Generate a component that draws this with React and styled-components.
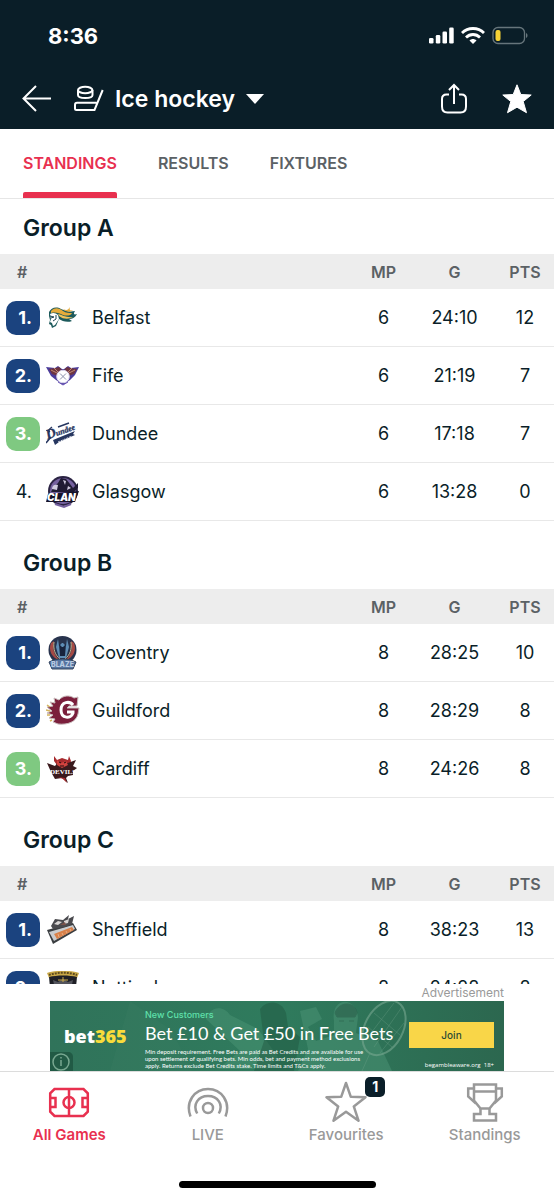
import React, { useState } from 'react';
import styled, { createGlobalStyle, css } from 'styled-components';

const GlobalStyle = createGlobalStyle`
  * {
    box-sizing: border-box;
  }

  body {
    margin: 0;
    background: #fff;
    color: #0a1e28;
    font-family: Inter, 'Liberation Sans', sans-serif;
  }

  button {
    padding: 0;
    border: none;
    background: none;
    color: inherit;
    font: inherit;
    cursor: pointer;
  }
`;

/* ---------- team crests ---------- */

const BelfastCrest = () => (
  <>
    <path d="M3 11C5 7 10 5 15 8c5 2 8 3 14 2-2 3-1 4 2 3-2 4-5 5-8 5l3 2c-5 2-10 0-13-2L10 25l-4 2-1-3-2-1 1-4-1-4z" fill="#1d5a5c" />
    <path d="M5 10c4-4 8-3 12 0 3 2 6 2 9 2-1 3-6 3-9 2-4-2-7-3-12-2z" fill="#e5ab3a" />
    <path d="M12 13c4 1 9 4 15 3-3 2-9 3-14-1z" fill="#efc35b" />
    <path d="M17 8c4 2 5 1 7-2-1 3 0 4 3 3-3 3-7 2-10-1z" fill="#e5ab3a" />
    <path d="M4 13c3-2 6-1 8 1l1 4-4 6-2 1-1-3-2-1 1-3z" fill="#fff" />
    <path d="M4 15l4 1-3 1M7 20l3-2M10 14v4" stroke="#1d4552" strokeWidth="1" fill="none" />
  </>
);

const FifeCrest = () => (
  <>
    <path d="M0 8l9 1 3-2 4 3h2l4-3 3 2 8-1-4 8-5 5-7 5-7-5-5-4z" fill="#4b3c9b" />
    <path d="M3 10l7-1 3-1 4 4-5 5-6-2zM31 10l-7-1-3-1-4 4 5 5 6-2z" fill="#6e3440" />
    <path d="M5 11l6 3M8 9l4 4M29 11l-6 3M26 9l-4 4" stroke="#c08a72" strokeWidth="1" />
    <circle cx="17" cy="17.500" r="6.300" fill="#fff" stroke="#d9d6ee" />
    <path d="M14 14.500l6 6M20 14.500l-6 6" stroke="#8b91ad" strokeWidth="1" />
    <path d="M12 23l5 3 5-3" stroke="#6b55b8" fill="none" />
  </>
);

const DundeeCrest = () => (
  <>
    <path d="M7 23l22-9-2 3 2 1-16 7-4 3z" fill="#26365f" />
    <path d="M12 25l14-6" stroke="#d9dde8" strokeWidth="1" strokeDasharray="2 1" />
    <path d="M6 10C3 12 2 14 4 15M12 10l11-4M5 20l-5 6" fill="none" stroke="#26365f" strokeWidth="1.500" />
    <g
      transform="rotate(-20 3 24)"
      fontFamily="Liberation Serif, serif"
      fontStyle="italic"
      fontWeight="700"
      fill="#26365f"
      stroke="#26365f"
      strokeWidth="0.300"
    >
      <text x="2" y="22" fontSize="14">D</text>
      <text x="12" y="22" fontSize="8">undee</text>
    </g>
  </>
);

const GlasgowCrest = () => (
  <>
    <circle cx="17" cy="16" r="15" fill="#2a2343" />
    <circle cx="17" cy="16" r="13" fill="#75619f" />
    <path d="M7 13l5-5 3-5 5 1 4 5 3 4 5-5v5l-4 4H5z" fill="#1f1a33" />
    <path d="M6 14c0-4 3-5 6-4l-1 5zM17 5l3 1-1 4zM22 11l3 2-4 2z" fill="#cfcadf" />
    <path d="M2 19l31-3-4 11H0z" fill="#17132a" />
    <text
      x="1"
      y="26"
      fontFamily="Inter, sans-serif"
      fontSize="10"
      fontStyle="italic"
      fontWeight="900"
      fill="#fff"
    >
      CLAN
    </text>
    <path d="M9 29l9 3 7-3" stroke="#75619f" strokeWidth="2" fill="none" />
  </>
);

const CoventryCrest = () => (
  <>
    <circle cx="16.500" cy="14" r="14" fill="#28334d" />
    <path d="M5 7c-3 7 1 15 8 17C8 18 6 13 8 5zM28 7c3 7-1 15-8 17 5-6 7-11 5-19z" fill="#a54a45" />
    <path d="M8 6c-1 7 1 13 6 17M25 6c1 7-1 13-6 17" stroke="#c6b38a" strokeWidth="1" fill="none" />
    <path d="M12 3l1 7 3-3h1l3 3 1-7 2 8-3 11h-7L10 11z" fill="#5f8db5" />
    <path d="M13 8l3 3h1l3-3-1 12h-5z" fill="#18233d" />
    <path d="M3 26c7-4 20-4 27 0l-3 7H6z" fill="#56749f" stroke="#33445f" />
    <text
      x="5"
      y="31"
      fontFamily="Inter, sans-serif"
      fontSize="7"
      fontWeight="800"
      fill="#b9cbe2"
    >
      BLAZE
    </text>
  </>
);

const GuildfordCrest = () => (
  <>
    <path
      d="M32 3l-1 9h-8l-2 2h12l-1 6c-2 8-10 11-20 10l-5-2 2-3-6-1 4-3-6-2 5-2-5-4 6-1-3-4 5 1-1-5 5 2C17 1 24 1 28 4z"
      fill="#7b1f3c"
      stroke="#c9bcbc"
      strokeWidth="1"
    />
    <path d="M27 11c-3-4-12-4-12 5 0 9 10 9 12 3v-1h-6" stroke="#fff" strokeWidth="3" fill="none" />
    <path d="M1 11l3 2M0 16l4 1M1 21l3 0M4 27l2-1" stroke="#d5b45c" strokeWidth="1.500" />
  </>
);

const CardiffCrest = () => (
  <>
    <path d="M8 4l3 4 5-2 6 2 1-4 2 5-1 4H11L8 9z" fill="#a72a2d" />
    <path d="M1 11l8 3 3-4 7 2 11-4-3 6 4 2-4 3 0 4-5 1-2 2 2 5-6-5-7 1-4-7z" fill="#3a1a1d" />
    <path d="M11 8l4 3 5-2 2 4-6 3-5-3z" fill="#d0433f" />
    <path d="M13 10l2 1M18 11l2-1M14 14h4" stroke="#1e0c0e" strokeWidth="1" />
    <text
      x="4"
      y="22"
      fontFamily="Liberation Serif, serif"
      fontSize="7"
      fontWeight="700"
      fill="#fff"
    >
      DEVILS
    </text>
    <path d="M12 25l5 2 4 4-2-5" fill="#a72a2d" />
  </>
);

const SheffieldCrest = () => (
  <>
    <path d="M1 17l26-7 4 7-24 14z" fill="#3a3d40" />
    <path d="M3 19l24-7 2 4-21 12z" fill="#c9cccf" />
    <path d="M8 21l18-7 2 3-17 9z" fill="#d9814a" />
    <path d="M12 21l1 3M16 20l1 2M20 18l1 2M24 16l1 2" stroke="#e9c3a4" strokeWidth="0.700" />
    <path d="M5 13l4-7 8 1 6-5-1 4 6-3-2 8-7 3-12 2z" fill="#4a4a4e" />
    <path d="M8 11l4-3 4 1-4 3zM18 8l5-2-1 4-4 1z" fill="#d8d5d4" />
    <path d="M14 12l5-3 1 3z" fill="#79524a" />
  </>
);

const NottinghamCrest = () => (
  <>
    <path d="M1 2C9-1 25-1 33 2l-2 5H3z" fill="#caa948" />
    <path d="M3 6c8-2 20-2 28 0l-2 20-12 7L5 26z" fill="#1f2026" />
    <path d="M3 4c8-3 20-3 28 0" stroke="#5f4c1e" strokeWidth="2" strokeDasharray="2 1" fill="none" />
    <path d="M7 9l5 2 5-3 5 3 5-2-2 9H9z" fill="#53545c" />
    <path d="M17 6v5M12 9h10" stroke="#caa948" strokeWidth="1" />
  </>
);

const crests = {
  Belfast: BelfastCrest,
  Fife: FifeCrest,
  Dundee: DundeeCrest,
  Glasgow: GlasgowCrest,
  Coventry: CoventryCrest,
  Guildford: GuildfordCrest,
  Cardiff: CardiffCrest,
  Sheffield: SheffieldCrest,
  Nottingham: NottinghamCrest,
};

/* ---------- data ---------- */

const groups = [
  {
    name: 'Group A',
    teams: [
      { name: 'Belfast', zone: 'top', mp: 6, goals: '24:10', pts: 12 },
      { name: 'Fife', zone: 'top', mp: 6, goals: '21:19', pts: 7 },
      { name: 'Dundee', zone: 'next', mp: 6, goals: '17:18', pts: 7 },
      { name: 'Glasgow', mp: 6, goals: '13:28', pts: 0 },
    ],
  },
  {
    name: 'Group B',
    teams: [
      { name: 'Coventry', zone: 'top', mp: 8, goals: '28:25', pts: 10 },
      { name: 'Guildford', zone: 'top', mp: 8, goals: '28:29', pts: 8 },
      { name: 'Cardiff', zone: 'next', mp: 8, goals: '24:26', pts: 8 },
    ],
  },
  {
    name: 'Group C',
    teams: [
      { name: 'Sheffield', zone: 'top', mp: 8, goals: '38:23', pts: 13 },
      { name: 'Nottingham', zone: 'top', mp: 8, goals: '24:28', pts: 8 },
    ],
  },
];

const tabs = ['STANDINGS', 'RESULTS', 'FIXTURES'];

/* ---------- icons ---------- */

const StatusIcons = () => (
  <svg width="100" height="20" viewBox="0 0 100 20" fill="#fff" aria-hidden="true">
    <rect x="0" y="12" width="4.500" height="5.500" rx="1.300" />
    <rect x="6.800" y="9" width="4.500" height="8.500" rx="1.300" />
    <rect x="13.500" y="5.500" width="4.500" height="12" rx="1.300" />
    <rect x="20.200" y="1.500" width="4.500" height="16" rx="1.300" />
    <g fill="none" stroke="#fff" strokeWidth="2.800">
      <path d="M33 7c6-6 16-6 22 0" />
      <path d="M37 11.500c4-4 10-4 14 0" />
    </g>
    <path d="M40.500 14.500c2-2 5-2 7 0L44 18z" />
    <rect x="64" y="1.500" width="31.500" height="16" rx="5" fill="none" stroke="#66757b" strokeWidth="1.300" />
    <path d="M97 7c2 .8 2 4.200 0 5z" fill="#66757b" />
    <rect x="66.500" y="4" width="5" height="11" rx="2" fill="#f7d335" />
  </svg>
);

const BackIcon = () => (
  <svg width="30" height="28" viewBox="0 0 30 28" fill="none" stroke="#fff" strokeWidth="2">
    <path d="M14 1L1.500 13.500 14 26M1.500 13.500H29" />
  </svg>
);

const HockeyIcon = () => (
  <svg width="30" height="28" viewBox="0 0 30 28" fill="none" stroke="#fff" strokeWidth="2">
    <path d="M4 5v5c0 4 14.500 4 14.500 0V5" />
    <ellipse cx="11.200" cy="5" rx="7.200" ry="3.200" />
    <path d="M28.700 5L20.500 25H2.500c-1 0-1.500-.5-1.500-1.500V20c0-1.500.7-2.200 2-2.200h19.500" />
  </svg>
);

const ShareIcon = () => (
  <svg width="28" height="32" viewBox="0 0 28 32" fill="none" stroke="#fff" strokeWidth="2">
    <path d="M9 11.500H6.500c-3 0-4.500 1.500-4.500 4.500v7.500c0 4 1.500 6 5.500 6h13c4 0 5.500-2 5.500-6V16c0-3-1.500-4.500-4.500-4.500H19" />
    <path d="M14 21V2.500M9 7l5-5 5 5" />
  </svg>
);

const StarFilledIcon = () => (
  <svg width="30" height="30" viewBox="0 0 30 30" fill="#fff" stroke="#fff" strokeLinejoin="round">
    <path d="M15 .8l3.800 9.700 10.400.5-8 6.500 3.300 11.200-9.500-5.500-9.500 5.500 3.300-11.200L.8 11l10.400-.5z" />
  </svg>
);

const PitchIcon = () => (
  <svg width="42" height="42" viewBox="0 0 42 42" fill="none" stroke="currentColor" strokeWidth="2.500">
    <path d="M6.500 8h29l4.300 4.300v18.400L35.500 35h-29l-4.300-4.300V12.300zM21 8v27" />
    <circle cx="21" cy="21.500" r="5.500" />
    <path d="M2 17h5.500v9H2M40 17h-5.500v9H40" />
  </svg>
);

const LiveIcon = () => (
  <svg width="42" height="42" viewBox="0 0 42 42" fill="none" stroke="currentColor" strokeWidth="2.500">
    <circle cx="21" cy="27" r="5" />
    <path d="M10.200 32.500c-5-9 1-17.500 10.800-17.500s15.800 8.500 10.800 17.500" />
    <path d="M3.500 35.500C-2 21 7.500 8 21 8s23 13 17.500 27.500" />
  </svg>
);

const StarIcon = () => (
  <svg width="42" height="42" viewBox="0 0 42 42" fill="none" stroke="currentColor" strokeWidth="2.500" strokeLinejoin="round">
    <path d="M21 2l4.800 13.800 14.700.4-11.700 9.200 4.700 14.300L21 30.800 8.500 39.700l4.700-14.300L1.500 16.200l14.700-.4z" />
  </svg>
);

const TrophyIcon = () => (
  <svg width="42" height="42" viewBox="0 0 42 42" fill="none" stroke="currentColor" strokeWidth="2.500">
    <path d="M10 3.500h22v16l-6.500 8h-9l-6.500-8zM10 10.500h22" />
    <path d="M10 7.500H4.200v8L12 22.500M32 7.500h5.800v8L30 22.500" />
    <path d="M16.500 27.500v5.500H10v6.500h22V33h-6.500v-5.500" />
  </svg>
);

const navItems = [
  { label: 'All Games', Icon: PitchIcon, active: true },
  { label: 'LIVE', Icon: LiveIcon },
  { label: 'Favourites', Icon: StarIcon, count: 1 },
  { label: 'Standings', Icon: TrophyIcon },
];

const BannerArt = () => (
  <BannerDrawing viewBox="0 0 454 70" preserveAspectRatio="xMidYMid slice" aria-hidden="true">
    <defs>
      <linearGradient id="pitch" x1="0" x2="1">
        <stop offset="0" stopColor="#30735a" />
        <stop offset="0.500" stopColor="#2f7b5d" />
        <stop offset="1" stopColor="#2c674f" />
      </linearGradient>
    </defs>
    <rect width="454" height="70" fill="url(#pitch)" />
    <path d="M80 0l42 30 20 40H60z" fill="#3a7d64" opacity="0.300" />
    <path d="M156 18c5-14 18-13 24-4l28 14 20 28-10 12h-50l22-18z" fill="#56a17f" opacity="0.350" />
    <path d="M210 8c8-10 22-8 26 4l2 14 12 10-6 34h-40l10-30z" fill="#20543f" opacity="0.450" />
    <path d="M250 10l16-4 6 12-14 8 8 14 18-6v-14c-4-24 22-26 24-4l-2 16 22 8 14 30h-94l10-22z" fill="#4c9375" opacity="0.500" />
    <path d="M285 12c4-12 20-12 22 0l-2 4h-18zM289 20h5M299 20h5" fill="#244f3f" stroke="#244f3f" opacity="0.400" />
    <g fill="none" stroke="#78a891" opacity="0.600">
      <ellipse cx="334" cy="27" rx="19" ry="29" transform="rotate(28 334 27)" strokeWidth="2" />
      <path d="M320 52l-8 18M324 46l28-40M318 36l26-34M330 52l24-30M324 12l26 22M318 26l24 20" strokeWidth="0.500" />
    </g>
    <path d="M0 51h18c3 0 5 2 5 5v14H0z" fill="#215a45" />
    <g fill="none" stroke="#78a891" strokeWidth="1.500">
      <circle cx="11" cy="61" r="8" />
      <path d="M11 59v6M11 56v1.500" />
    </g>
  </BannerDrawing>
);

/* ---------- page ---------- */

const StandingsTable = ({ group }) => (
  <Table aria-label={group.name}>
    <thead>
      <tr>
        <HeadCell $width={40} $first>#</HeadCell>
        <HeadCell aria-label="Team" />
        <HeadCell $width={59}>MP</HeadCell>
        <HeadCell $width={83}>G</HeadCell>
        <HeadCell $width={58}>PTS</HeadCell>
      </tr>
    </thead>
    <tbody>
      {group.teams.map((team, index) => {
        const Crest = crests[team.name];
        return (
          <tr key={team.name}>
            <RankCell>
              <Rank $zone={team.zone}>{index + 1}.</Rank>
            </RankCell>
            <Cell>
              <Team>
                <svg width="34" height="34" viewBox="0 0 34 34" aria-hidden="true">
                  <Crest />
                </svg>
                {team.name}
              </Team>
            </Cell>
            <Cell>{team.mp}</Cell>
            <Cell>{team.goals}</Cell>
            <Cell>{team.pts}</Cell>
          </tr>
        );
      })}
    </tbody>
  </Table>
);

const App = () => {
  const [activeTab, setActiveTab] = useState('STANDINGS');

  return (
    <Page>
      <GlobalStyle />
      <Header>
        <StatusBar>
          <span>8:36</span>
          <StatusIcons />
        </StatusBar>
        <TitleBar>
          <IconButton aria-label="Back">
            <BackIcon />
          </IconButton>
          <SportButton>
            <HockeyIcon />
            Ice hockey
            <Caret />
          </SportButton>
          <Actions>
            <IconButton aria-label="Share">
              <ShareIcon />
            </IconButton>
            <IconButton aria-label="Favourite">
              <StarFilledIcon />
            </IconButton>
          </Actions>
        </TitleBar>
      </Header>

      <Tabs>
        {tabs.map((tab) => (
          <Tab key={tab} $active={tab === activeTab} onClick={() => setActiveTab(tab)}>
            {tab}
          </Tab>
        ))}
      </Tabs>

      <Content>
        {groups.map((group) => (
          <section key={group.name}>
            <GroupTitle>{group.name}</GroupTitle>
            <StandingsTable group={group} />
          </section>
        ))}
      </Content>

      <AdArea>
        <AdLabel>Advertisement</AdLabel>
        <Banner>
          <BannerArt />
          <BannerLogo>
            bet<span>365</span>
          </BannerLogo>
          <BannerCopy>
            <BannerIntro>New Customers</BannerIntro>
            <BannerHeadline>Bet £10 &amp; Get £50 in Free Bets</BannerHeadline>
            <SmallPrint>
              Min deposit requirement. Free Bets are paid as Bet Credits and are available for use
              <br />
              upon settlement of qualifying bets. Min odds, bet and payment method exclusions
              <br />
              apply. Returns exclude Bet Credits stake. Time limits and T&amp;Cs apply.
            </SmallPrint>
          </BannerCopy>
          <BannerAction>
            <JoinButton>Join</JoinButton>
            <BannerNote>begambleaware.org&nbsp; 18+</BannerNote>
          </BannerAction>
        </Banner>
      </AdArea>

      <BottomBar>
        <BottomNav>
          {navItems.map(({ label, Icon, active, count }) => (
            <NavLink key={label} href="#" $active={active}>
              <NavIcon>
                <Icon />
                {count && <CountBadge>{count}</CountBadge>}
              </NavIcon>
              {label}
            </NavLink>
          ))}
        </BottomNav>
        <HomeIndicator />
      </BottomBar>
    </Page>
  );
};

const Page = styled.div`
  display: flex;
  flex-direction: column;
  height: 100vh;
`;

const Header = styled.header`
  background: #0a1e28;
  color: #fff;
`;

const StatusBar = styled.div`
  display: flex;
  align-items: center;
  justify-content: space-between;
  height: 68px;
  padding: 3px 25px 0 48px;
  font-size: 22px;
  font-weight: 700;
`;

const TitleBar = styled.div`
  display: flex;
  align-items: center;
  gap: 22px;
  height: 61px;
  padding: 0 22px;
`;

const IconButton = styled.button`
  display: flex;
`;

const SportButton = styled.button`
  && {
    display: flex;
    align-items: center;
    gap: 11px;
    font-size: 23px;
    font-weight: 600;
  }
`;

const Caret = styled.span`
  border: 9px solid transparent;
  border-top: 10px solid #fff;
  border-bottom: none;
`;

const Actions = styled.div`
  display: flex;
  align-items: center;
  gap: 34px;
  margin-left: auto;
`;

const Tabs = styled.nav`
  display: flex;
  gap: 41px;
  height: 70px;
  padding: 0 23px;
  border-bottom: 1px solid #e6e6e6;
`;

const Tab = styled.button`
  && {
    display: flex;
    flex-direction: column;
    justify-content: space-between;
    padding-top: 24px;
    color: ${({ $active }) => ($active ? '#e8304f' : '#5b6165')};
    font-size: 16px;
    font-weight: 600;
    line-height: 20px;
  }

  &::after {
    content: '';
    width: 100%;
    height: 6px;
    border-radius: 2px 2px 0 0;
    background: ${({ $active }) => ($active ? '#e8304f' : 'transparent')};
  }
`;

const Content = styled.main`
  flex: 1;
  min-height: 0;
  overflow: hidden;
`;

const GroupTitle = styled.h2`
  margin: 0;
  padding: 28px 23px 12px;
  font-size: 23px;
  font-weight: 600;
  line-height: 28px;

  section:first-child > & {
    padding-top: 15px;
  }
`;

const Table = styled.table`
  width: 100%;
  border-collapse: separate;
  border-spacing: 0;
  table-layout: fixed;
`;

const HeadCell = styled.th`
  width: ${({ $width }) => ($width ? `${$width}px` : 'auto')};
  height: 35px;
  padding: 0;
  background: #ededed;
  color: #5b6165;
  font-size: 16px;
  font-weight: 600;
  ${({ $first }) =>
    $first &&
    css`
      padding-left: 17px;
      text-align: left;
    `}
`;

const Cell = styled.td`
  height: 58px;
  padding: 0;
  border-bottom: 1px solid #e8e8e8;
  font-size: 18px;
  text-align: center;
`;

const RankCell = styled(Cell)`
  padding-left: 6px;
`;

const zoneColors = { top: '#1b437f', next: '#7fc981' };

const Rank = styled.div`
  height: 34px;
  padding-right: 8px;
  border-radius: 10px;
  background: ${({ $zone }) => zoneColors[$zone] || 'transparent'};
  color: ${({ $zone }) => ($zone ? '#fff' : 'inherit')};
  font-weight: ${({ $zone }) => ($zone ? 700 : 400)};
  line-height: 34px;
  text-align: right;
`;

const Team = styled.div`
  display: flex;
  align-items: center;
  gap: 12px;
  padding-left: 6px;
`;

const AdArea = styled.aside`
  width: 454px;
  max-width: 100%;
  margin: 0 auto;
`;

const AdLabel = styled.div`
  color: #9a9a9a;
  font-size: 12px;
  line-height: 17px;
  text-align: right;
`;

const Banner = styled.div`
  position: relative;
  display: grid;
  grid-template-columns: 81px minmax(0, 1fr) 85px;
  column-gap: 14px;
  height: 70px;
  padding-right: 10px;
  color: #fff;
`;

const BannerDrawing = styled.svg`
  position: absolute;
  inset: 0;
  z-index: -1;
  width: 100%;
  height: 100%;
`;

const BannerLogo = styled.div`
  align-self: center;
  padding-left: 14px;
  font-family: 'Noto Sans', sans-serif;
  font-size: 18px;
  font-weight: 900;

  span {
    color: #f9dc3a;
  }
`;

const BannerCopy = styled.div`
  padding-top: 7px;
  white-space: nowrap;
`;

const BannerIntro = styled.div`
  color: #5fe0ab;
  font-size: 9px;
  font-weight: 500;
  line-height: 13px;
`;

const BannerHeadline = styled.div`
  font-family: Lato, sans-serif;
  font-size: 18px;
  line-height: 24px;
`;

const SmallPrint = styled.p`
  margin: 3px 0 0;
  font-family: Lato, sans-serif;
  font-size: 6px;
  line-height: 7px;
`;

const BannerAction = styled.div`
  padding-top: 21px;
  text-align: right;
`;

const JoinButton = styled.button`
  && {
    display: block;
    width: 100%;
    height: 26px;
    background: #f9d648;
    color: #2a4a35;
    font-size: 10px;
    font-weight: 500;
  }
`;

const BannerNote = styled.div`
  margin-top: 12px;
  font-family: 'Open Sans', sans-serif;
  font-size: 6px;
  line-height: 10px;
  white-space: nowrap;
`;

const BottomBar = styled.footer`
  height: 129px;
  border-top: 1px solid #dcdcdc;
`;

const BottomNav = styled.nav`
  display: grid;
  grid-template-columns: repeat(4, 1fr);
  padding-top: 9px;
`;

const NavLink = styled.a`
  display: flex;
  flex-direction: column;
  align-items: center;
  gap: 3px;
  color: ${({ $active }) => ($active ? '#e8304f' : '#999')};
  font-size: 15px;
  font-weight: ${({ $active }) => ($active ? 600 : 500)};
  line-height: 18px;
  text-decoration: none;
`;

const NavIcon = styled.span`
  position: relative;
  display: flex;
`;

const CountBadge = styled.span`
  position: absolute;
  top: -4px;
  right: -18px;
  width: 20px;
  height: 20px;
  border-radius: 5px;
  background: #0a1e28;
  color: #fff;
  font-size: 14px;
  font-weight: 700;
  line-height: 20px;
  text-align: center;
`;

const HomeIndicator = styled.div`
  width: 197px;
  height: 7px;
  margin: 37px auto 0;
  border-radius: 4px;
  background: #000;
`;

export default App;
